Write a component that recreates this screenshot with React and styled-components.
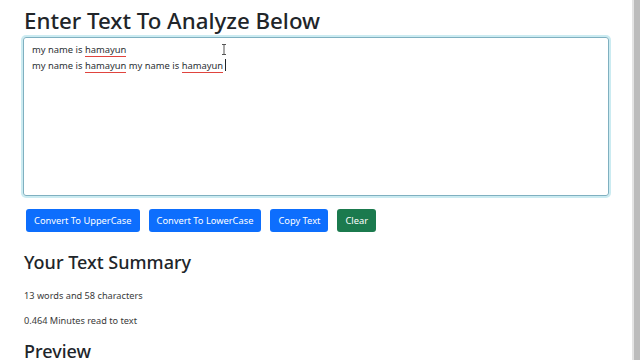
import React from 'react';
import styled, { createGlobalStyle } from 'styled-components';

const GlobalStyle = createGlobalStyle`
  html, body {
    margin: 0;
    padding: 0;
    background: #fff;
    overflow: hidden;
  }
  body {
    font-family: "Noto Sans", "Open Sans", sans-serif;
    color: #212529;
  }
`;

const Page = styled.div`
  display: flex;
  height: 100vh;
`;

const Main = styled.main`
  flex: 1;
  min-width: 0;
  padding: 7px 23px 0 23px;
`;

const Scrollbar = styled.div`
  width: 8px;
  flex-shrink: 0;
  display: flex;
  background: #e4e4e4;
  padding-left: 2px;
  box-sizing: border-box;
`;

const Thumb = styled.div`
  flex: 1;
  background: #bcbcbc;
`;

const Title = styled.h1`
  margin: 0 0 3px 1px;
  font-size: 22.3px;
  font-weight: 500;
  line-height: 27px;
`;

const SubTitle = styled.h2`
  margin: 0 0 15px 1px;
  font-size: 18px;
  font-weight: 500;
  line-height: 24px;
`;

const EditorWrap = styled.div`
  position: relative;
`;

const Editor = styled.div`
  height: 159px;
  box-sizing: border-box;
  padding: 4px 8px;
  border: 1px solid #7fb0c0;
  border-radius: 3px;
  box-shadow: 0 0 0 2px rgba(140, 210, 225, 0.45);
  font-size: 9.4px;
  line-height: 16px;
  color: #2b2f33;
`;

const Misspelled = styled.span`
  display: inline-block;
  line-height: 12px;
  padding-bottom: 1px;
  background: linear-gradient(#e0443e, #e0443e) left bottom / 100% 1px no-repeat;
`;

const Caret = styled.span`
  display: inline-block;
  width: 1px;
  height: 12px;
  margin-left: 2px;
  background: #212529;
  vertical-align: -2px;
`;

const Cursor = styled.svg`
  position: absolute;
  left: 198px;
  top: 7px;
`;

const ButtonRow = styled.div`
  display: flex;
  gap: 9px;
  margin: 13px 0 18px 3px;
`;

const Button = styled.button`
  height: 23px;
  padding: 0 8px;
  border: none;
  border-radius: 3px;
  background: ${p => (p.$variant === 'success' ? '#1b7a4e' : '#0d6efd')};
  color: #fff;
  font-family: inherit;
  font-size: 9.3px;
  cursor: pointer;
`;

const Para = styled.p`
  margin: 0 0 12px 1px;
  font-size: 9.2px;
  line-height: 13px;
  color: #3a3a3a;
`;

const lines = [
  ['my name is ', 'hamayun'],
  ['my name is ', 'hamayun', ' my name is ', 'hamayun'],
];

export default function App() {
  return (
    <Page>
      <GlobalStyle />
      <Main>
        <Title>Enter Text To Analyze Below</Title>
        <EditorWrap>
          <Editor>
            {lines.map((parts, i) => (
              <div key={i}>
                {parts.map((p, j) =>
                  p === 'hamayun' ? <Misspelled key={j}>{p}</Misspelled> : <span key={j}>{p}</span>
                )}
                {i === lines.length - 1 && <Caret />}
              </div>
            ))}
          </Editor>
          <Cursor width="6" height="11" viewBox="0 0 6 11">
            <path d="M1 0.5h4M3 0.5v10M1 10.5h4" stroke="#555" strokeWidth="1" fill="none" />
          </Cursor>
        </EditorWrap>
        <ButtonRow>
          <Button>Convert To UpperCase</Button>
          <Button>Convert To LowerCase</Button>
          <Button>Copy Text</Button>
          <Button $variant="success">Clear</Button>
        </ButtonRow>
        <SubTitle>Your Text Summary</SubTitle>
        <Para>13 words and 58 characters</Para>
        <Para>0.464 Minutes read to text</Para>
        <SubTitle>Preview</SubTitle>
      </Main>
      <Scrollbar>
        <Thumb />
      </Scrollbar>
    </Page>
  );
}
